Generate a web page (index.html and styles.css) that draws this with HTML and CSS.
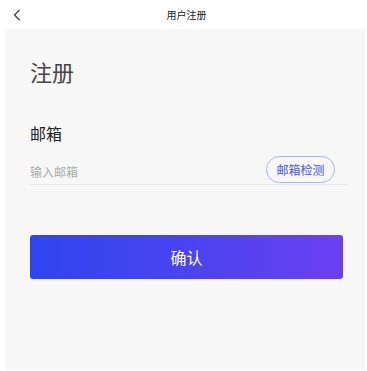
FILE: index.html
```html
<!DOCTYPE html>
<html lang="zh">
<head>
<meta charset="utf-8">
<link rel="stylesheet" href="styles.css">
</head>
<body>
<header class="nav">
  <span class="back"><svg width="8" height="12" viewBox="0 0 8 12"><path d="M6.5 0.8 L1.5 6 L6.5 11.2" fill="none" stroke="#333" stroke-width="1.2"/></svg></span>
  <span class="nav-title">用户注册</span>
</header>
<main class="panel">
  <h1 class="title">注册</h1>
  <div class="label">邮箱</div>
  <div class="field">
    <span class="placeholder">输入邮箱</span>
    <span class="check">邮箱检测</span>
  </div>
  <div class="confirm">确认</div>
</main>
</body>
</html>
```
FILE: styles.css
```css
html, body {
  margin: 0;
  padding: 0;
  background: #fff;
  font-family: "Noto Sans CJK SC", "Noto Sans", sans-serif;
}
.nav {
  height: 29px;
  display: flex;
  align-items: center;
  justify-content: center;
  position: relative;
}
.back {
  position: absolute;
  left: 13px;
  top: 9px;
  display: flex;
}
.nav-title {
  font-size: 10px;
  color: #222;
  line-height: 12px;
  margin-left: 6px;
}
.panel {
  margin: 0 1px 0 5px;
  height: 341px;
  background: #f7f7f7;
  padding: 30px 18px 0 25px;
  box-sizing: border-box;
}
.title {
  margin: 0;
  font-size: 22px;
  font-weight: normal;
  color: #444;
  line-height: 24px;
}
.label {
  margin-top: 41px;
  font-size: 16px;
  line-height: 18px;
  color: #222;
}
.field {
  margin-top: 14px;
  display: flex;
  align-items: center;
  justify-content: space-between;
  border-bottom: 1px solid #e8e8e8;
  padding: 0 13px 1px 0;
}
.placeholder {
  font-size: 12px;
  line-height: 14px;
  color: #aaa;
  margin-top: 5px;
}
.check {
  box-sizing: border-box;
  height: 27px;
  width: 69px;
  border: 1px solid #a9affa;
  border-radius: 14px;
  color: #4b55ee;
  font-size: 12px;
  display: flex;
  align-items: center;
  justify-content: center;
}
.confirm {
  margin-top: 50px;
  margin-right: 5px;
  height: 44px;
  border-radius: 3px;
  background: linear-gradient(90deg, #2f45ef 0%, #4a43f0 50%, #6b40f1 100%);
  color: #fff;
  font-size: 16px;
  display: flex;
  align-items: center;
  justify-content: center;
}
```
